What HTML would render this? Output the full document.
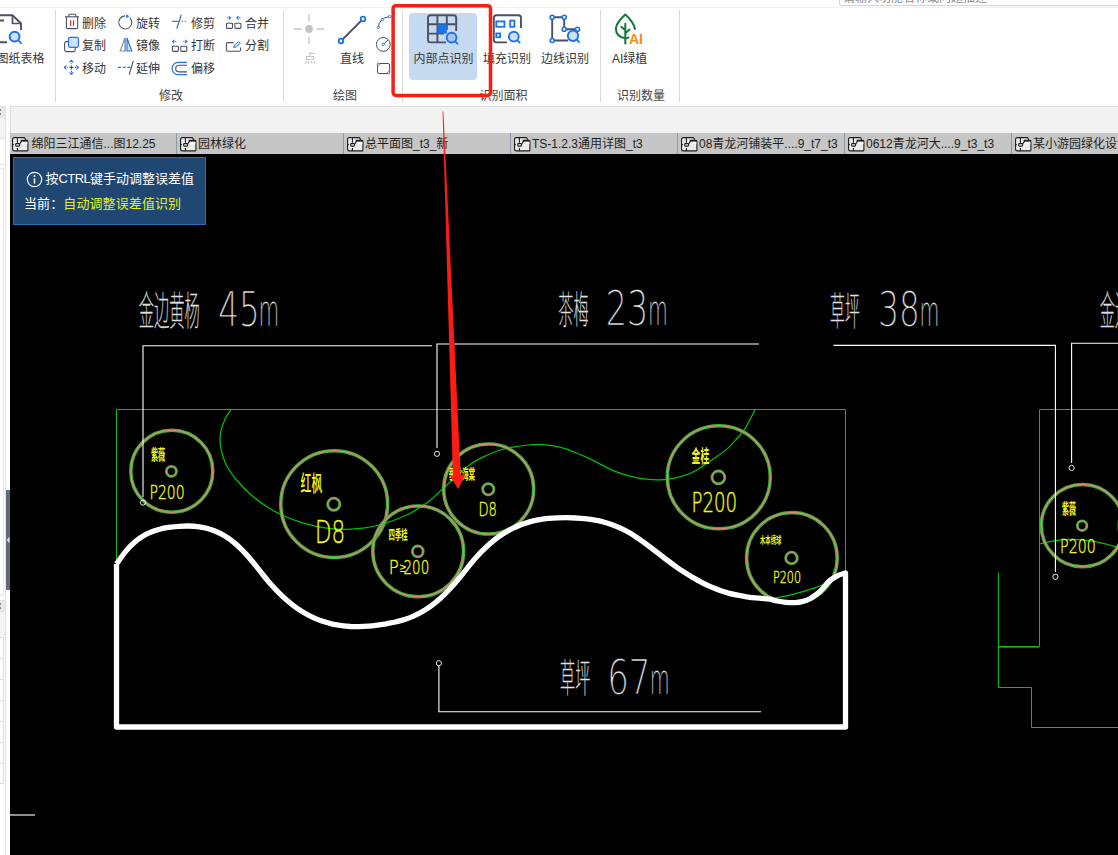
<!DOCTYPE html>
<html lang="zh-CN">
<head>
<meta charset="utf-8">
<title>CAD</title>
<style>
html,body{margin:0;padding:0;}
body{width:1118px;height:855px;overflow:hidden;position:relative;background:#fff;
 font-family:"Liberation Sans","Noto Sans CJK SC",sans-serif;font-size:12px;color:#333;}
.abs{position:absolute;}
#ribbon{position:absolute;left:0;top:0;width:1118px;height:106px;background:#fff;}
#ribbon .topline{position:absolute;left:0;top:7px;width:1118px;height:1px;background:#f0f0f0;}
#ribbon .sep{position:absolute;top:10px;width:1px;height:92px;background:#d9d9d9;}
#ribbon .t{position:absolute;white-space:nowrap;line-height:16px;height:16px;font-size:12px;color:#363636;}
#ribbon .g{position:absolute;white-space:nowrap;line-height:16px;height:16px;font-size:12px;color:#444;top:88px;}
#ribbon svg{position:absolute;overflow:visible;}
#band{position:absolute;left:10px;top:106px;width:1108px;height:27px;background:#f2f2f2;border-top:1px solid #dcdcdc;border-left:1px solid #e0e0e0;box-sizing:border-box;}
#tabs{position:absolute;left:10px;top:133px;width:1108px;height:21px;background:#c6c6c6;}
#tabs .tab{position:absolute;top:0;height:21px;width:167px;box-sizing:border-box;border-left:1px solid #8e98a6;white-space:nowrap;overflow:hidden;font-size:12px;line-height:21px;color:#1e1e1e;}
#tabs .tab span{position:absolute;left:21px;top:0.5px;}
#tabs .tab:first-child span{left:21.5px;}
#tabs .tab:first-child svg{left:2px;}
#tabs .tab svg{position:absolute;left:2.5px;top:3.5px;}
#cad{position:absolute;left:10px;top:154px;width:1108px;height:701px;background:#000;}
#info{position:absolute;left:13px;top:157px;width:193px;height:68px;box-sizing:border-box;background:#1f4772;border:1px solid #2e6db3;color:#fff;font-size:13px;}
#info .l1{position:absolute;left:31.5px;top:12px;line-height:18px;white-space:nowrap;}
#info .l2{position:absolute;left:10px;top:37px;line-height:18px;white-space:nowrap;font-size:13px;letter-spacing:0.1px;}
#info .l2 b{font-weight:normal;color:#e4f21c;}
#left{position:absolute;left:0;top:106px;width:10px;height:749px;background:#fff;}
</style>
</head>
<body>
<div id="ribbon">
 <div class="topline"></div>
 <!-- search box (cropped at top) -->
 <div class="abs" style="left:839px;top:-18px;width:300px;height:22px;border:1px solid #d4d4d4;border-radius:2px;background:#fff;"></div>
 <div class="abs" style="left:843px;top:-10px;font-size:12px;line-height:16px;color:#8a8a8a;white-space:nowrap;">请输入功能名称或问题描述</div>

 <!-- 图纸表格 big button -->
 <svg style="left:-10px;top:10px" width="40" height="40" viewBox="-10 10 40 40" fill="none">
  <path d="M-6 15.2H12.5L21 23.5V30" stroke="#4a5162" stroke-width="1.9"/>
  <path d="M12.5 15.2V23.5H21" stroke="#4a5162" stroke-width="1.7"/>
  <path d="M-6 20.5H4M-6 42.3H7" stroke="#4a5162" stroke-width="1.9"/>
  <circle cx="14.6" cy="36.6" r="4.9" fill="#cfe0f8" stroke="#1b73e8" stroke-width="2"/>
  <path d="M18.3 40.4L21.6 43.6" stroke="#1b73e8" stroke-width="1.8"/>
 </svg>
 <div class="t" style="left:-3.5px;top:51px;">图纸表格</div>

 <div class="sep" style="left:55px"></div>

 <!-- col 1 icons -->
 <svg style="left:60px;top:10px" width="24" height="70" viewBox="60 10 24 70" fill="none">
  <!-- trash -->
  <path d="M65 16.8H79" stroke="#4a5162" stroke-width="1.1"/>
  <path d="M68.8 16.8V15.3Q68.8 14.3 69.8 14.3H74.8Q75.8 14.3 75.8 15.3V16.8" stroke="#4a5162" stroke-width="1.1"/>
  <path d="M66.4 16.8V27.2Q66.4 28.6 67.8 28.6H76.3Q77.7 28.6 77.7 27.2V16.8" stroke="#4a5162" stroke-width="1.1"/>
  <path d="M70.6 20.2V25.8M73.6 20.2V25.8" stroke="#e02020" stroke-width="1.1"/>
  <!-- copy -->
  <rect x="64.6" y="41.6" width="10.6" height="10" rx="1.8" stroke="#4a5162" stroke-width="1.1"/>
  <rect x="68.5" y="37.4" width="10" height="10" rx="1.8" fill="#cfe0f8" stroke="#1b73e8" stroke-width="1.2"/>
  <!-- move -->
  <g stroke="#1b73e8" stroke-width="1.1">
   <path d="M71.4 60.5V64M71.4 70.8V74.3M64.5 67.4H68M74.8 67.4H78.3" stroke-dasharray="1.6 1.2"/>
   <path d="M69.5 62.4L71.4 60.4L73.3 62.4M69.5 72.4L71.4 74.4L73.3 72.4M66.4 65.5L64.4 67.4L66.4 69.3M76.4 65.5L78.4 67.4L76.4 69.3"/>
  </g>
  <path d="M69.4 67.4H73.4M71.4 65.4V69.4" stroke="#4a5162" stroke-width="1.1"/>
 </svg>
 <div class="t" style="left:82px;top:16px;">删除</div>
 <div class="t" style="left:82px;top:38px;">复制</div>
 <div class="t" style="left:82px;top:61px;">移动</div>

 <!-- col 2 icons -->
 <svg style="left:114px;top:10px" width="24" height="70" viewBox="114 10 24 70" fill="none">
  <!-- rotate -->
  <path d="M127.8 16.4A6.5 6.5 0 1 1 122.8 16.4" stroke="#4a5162" stroke-width="1.1" transform="rotate(20 125.3 22.4)"/>
  <path d="M126.2 14.3L129.3 16.3L126.2 18.2Z" fill="#1b73e8"/>
  <!-- mirror -->
  <path d="M124.9 38L120.2 51H124.9Z" stroke="#8a8f9a" stroke-width="1.1"/>
  <path d="M125.5 37.5V51.5" stroke="#9aa0ab" stroke-width="1.1"/>
  <path d="M127 38L131.8 51H127Z" fill="#cfe0f8" stroke="#1b73e8" stroke-width="1.1"/>
  <!-- extend -->
  <path d="M118 67.4H130.5" stroke="#1b73e8" stroke-width="1.1" stroke-dasharray="3 1.7"/>
  <path d="M133.2 61L129.2 74.6" stroke="#4a5162" stroke-width="1.1"/>
 </svg>
 <div class="t" style="left:136px;top:16px;">旋转</div>
 <div class="t" style="left:136px;top:38px;">镜像</div>
 <div class="t" style="left:136px;top:61px;">延伸</div>

 <!-- col 3 icons -->
 <svg style="left:168px;top:10px" width="24" height="70" viewBox="168 10 24 70" fill="none">
  <!-- trim -->
  <path d="M172 21.3H178.6" stroke="#1b73e8" stroke-width="1.1"/>
  <path d="M181.5 21.3H187" stroke="#1b73e8" stroke-width="1.1" stroke-dasharray="1.5 1.6"/>
  <path d="M181.2 14.9L176.8 28.7" stroke="#4a5162" stroke-width="1.1"/>
  <!-- break -->
  <rect x="172.4" y="46.2" width="6" height="5.2" rx="0.8" stroke="#4a5162" stroke-width="1.1"/>
  <rect x="180.8" y="46.2" width="6" height="5.2" rx="0.8" stroke="#4a5162" stroke-width="1.1"/>
  <g stroke="#1b73e8" stroke-width="1.1">
   <path d="M173 41.5H176.3M183.3 41.5H186.6" stroke-dasharray="1.3 0.8"/>
   <path d="M174.3 39.8L172.6 41.5L174.3 43.2M185.3 39.8L187 41.5L185.3 43.2"/>
  </g>
  <!-- offset -->
  <path d="M187 62.4H178.2A6.1 6.1 0 0 0 178.2 74.6H187" stroke="#1b73e8" stroke-width="1.2"/>
  <path d="M187 65.3H179A3.3 3.3 0 0 0 179 71.9H187" stroke="#4a5162" stroke-width="1.1"/>
 </svg>
 <div class="t" style="left:191px;top:16px;">修剪</div>
 <div class="t" style="left:191px;top:38px;">打断</div>
 <div class="t" style="left:191px;top:61px;">偏移</div>

 <!-- col 4 icons -->
 <svg style="left:222px;top:10px" width="24" height="50" viewBox="222 10 24 50" fill="none">
  <!-- merge -->
  <rect x="226.5" y="23.2" width="6" height="5.2" rx="0.8" stroke="#4a5162" stroke-width="1.1"/>
  <rect x="234.9" y="23.2" width="6" height="5.2" rx="0.8" stroke="#4a5162" stroke-width="1.1"/>
  <g stroke="#1b73e8" stroke-width="1.1">
   <path d="M227 17.8H230.3M237 17.8H240.4" stroke-dasharray="1.3 0.8"/>
   <path d="M228.8 16.1L230.5 17.8L228.8 19.5M238.6 16.1L236.9 17.8L238.6 19.5"/>
  </g>
  <!-- split -->
  <path d="M233.5 42.6H227.8Q226.4 42.6 226.4 44V49.8Q226.4 51.2 227.8 51.2H239.2Q240.6 51.2 240.6 49.8V47.5" stroke="#4a5162" stroke-width="1.1"/>
  <path d="M233.6 47.6L234.4 45.2L238.6 41.6L240.4 43.2L236.2 47Z" fill="#cfe0f8" stroke="#1b73e8" stroke-width="0.9"/>
 </svg>
 <div class="t" style="left:245px;top:16px;">合并</div>
 <div class="t" style="left:245px;top:38px;">分割</div>
 <div class="g" style="left:159px;">修改</div>

 <div class="sep" style="left:283px"></div>

 <!-- 绘图 group -->
 <svg style="left:290px;top:10px" width="104" height="70" viewBox="290 10 104 70" fill="none">
  <!-- point (disabled) -->
  <path d="M294 29H301.5M316.5 29H324M309 14V21.5M309 36.5V44" stroke="#c4c4c4" stroke-width="1.3"/>
  <circle cx="309" cy="29" r="3.9" fill="#c4c4c4"/>
  <!-- line -->
  <path d="M341 41L363 19" stroke="#4a5162" stroke-width="1.8"/>
  <circle cx="341" cy="41" r="2.3" fill="#fff" stroke="#1b73e8" stroke-width="1.8"/>
  <circle cx="363" cy="19" r="2.3" fill="#fff" stroke="#1b73e8" stroke-width="1.8"/>
  <!-- arc -->
  <path d="M378.4 27.4Q379 18 389.5 16.6" stroke="#4a5162" stroke-width="1"/>
  <circle cx="378.4" cy="27.4" r="1.2" fill="#fff" stroke="#1b73e8" stroke-width="0.9"/>
  <circle cx="382.3" cy="19.6" r="1.2" fill="#fff" stroke="#1b73e8" stroke-width="0.9"/>
  <circle cx="389.5" cy="16.6" r="1.2" fill="#fff" stroke="#1b73e8" stroke-width="0.9"/>
  <!-- circle -->
  <circle cx="383.3" cy="44.4" r="6.9" stroke="#4a5162" stroke-width="1"/>
  <path d="M383.3 44.4L388 40" stroke="#4a5162" stroke-width="1"/>
  <circle cx="383.3" cy="44.4" r="1.2" fill="#fff" stroke="#1b73e8" stroke-width="0.9"/>
  <!-- rect -->
  <rect x="377.6" y="63.5" width="12" height="10" rx="1.5" stroke="#4a5162" stroke-width="1"/>
  <circle cx="378.3" cy="64.2" r="1.2" fill="#fff" stroke="#1b73e8" stroke-width="0.9"/>
  <circle cx="388.6" cy="72.8" r="1.2" fill="#fff" stroke="#1b73e8" stroke-width="0.9"/>
 </svg>
 <div class="t" style="left:304px;top:51px;color:#bbb;">点</div>
 <div class="t" style="left:340px;top:51px;">直线</div>
 <div class="g" style="left:333px;">绘图</div>

 <div class="sep" style="left:402px"></div>

 <!-- 识别面积 group -->
 <div class="abs" style="left:409px;top:13px;width:68px;height:67px;background:#c5d9f1;border-radius:4px;"></div>
 <svg style="left:420px;top:10px" width="170" height="40" viewBox="420 10 170 40" fill="none">
  <!-- 内部点识别 icon -->
  <path d="M446 42.4H430.6Q428 42.4 428 39.8V17.8Q428 15.2 430.6 15.2H453.6Q456.2 15.2 456.2 17.8V31" stroke="#4a5162" stroke-width="1.9"/>
  <path d="M437.4 15.2V42.4M446.8 15.2V30M428 24.3H456.2M428 33.6H444" stroke="#4a5162" stroke-width="1.9"/>
  <rect x="437.4" y="24.3" width="9.4" height="9.3" fill="#1b73e8"/>
  <circle cx="451.6" cy="37.6" r="4.9" fill="#a6c5f0" stroke="#1b73e8" stroke-width="1.9"/>
  <path d="M455.2 41.3L458 44.2" stroke="#1b73e8" stroke-width="1.8"/>
  <!-- 填充识别 icon -->
  <path d="M507 42.4H496.4Q493.8 42.4 493.8 39.8V17.8Q493.8 15.2 496.4 15.2H518.4Q521 15.2 521 17.8V28" stroke="#4a5162" stroke-width="1.9"/>
  <rect x="496.3" y="21.4" width="8.2" height="5.4" stroke="#1b73e8" stroke-width="1.8"/>
  <rect x="510.2" y="20.6" width="4.2" height="6.2" stroke="#1b73e8" stroke-width="1.8"/>
  <rect x="496.3" y="33.4" width="3.8" height="3.8" stroke="#1b73e8" stroke-width="1.8"/>
  <circle cx="513.8" cy="36.6" r="4.9" fill="#cfe0f8" stroke="#1b73e8" stroke-width="1.9"/>
  <path d="M517.4 40.3L520.2 43.2" stroke="#1b73e8" stroke-width="1.8"/>
  <!-- 边线识别 icon -->
  <path d="M552.2 17.2V40.5H568M552.2 17.2H564.2V29.2H577.6" stroke="#4a5162" stroke-width="1.9"/>
  <circle cx="573" cy="35.8" r="5.2" fill="#cfe0f8" stroke="#1b73e8" stroke-width="1.9"/>
  <path d="M576.8 39.6L579.6 42.6" stroke="#1b73e8" stroke-width="1.8"/>
  <g fill="#fff" stroke="#1b73e8" stroke-width="1.6">
   <circle cx="552.2" cy="17.2" r="2"/><circle cx="564.2" cy="17.2" r="2"/>
   <circle cx="564.2" cy="29.2" r="2"/><circle cx="577.6" cy="29.2" r="2"/>
   <circle cx="552.2" cy="40.5" r="2"/>
  </g>
 </svg>
 <div class="t" style="left:413.5px;top:51px;">内部点识别</div>
 <div class="t" style="left:483px;top:51px;">填充识别</div>
 <div class="t" style="left:541px;top:51px;">边线识别</div>
 <div class="g" style="left:479.5px;">识别面积</div>

 <div class="sep" style="left:600px"></div>

 <!-- AI绿植 -->
 <svg style="left:610px;top:10px" width="40" height="40" viewBox="610 10 40 40" fill="none">
  <path d="M628.4 37.6Q627 38.3 625.3 38.3Q615.9 36.6 615.9 28.4Q616.4 22.6 625.3 14.5Q633.6 22 635 29" stroke="#14773a" stroke-width="2" stroke-linecap="round" stroke-linejoin="round"/>
  <path d="M625.3 23.8V43.4M621.3 26.8L625.3 30.2M629.5 29.6L625.3 33.2" stroke="#14773a" stroke-width="2" stroke-linecap="round"/>
  <text x="629" y="43.9" font-family="'Liberation Sans',sans-serif" font-weight="bold" font-size="13.8" fill="#f28a1e" textLength="14" lengthAdjust="spacingAndGlyphs">AI</text>
 </svg>
 <div class="t" style="left:612px;top:51px;">AI绿植</div>
 <div class="g" style="left:617px;">识别数量</div>

 <div class="sep" style="left:679px"></div>
</div>
<div id="left">
 <div class="abs" style="left:0;top:0;width:6px;height:749px;box-sizing:border-box;border-right:1px solid #e2e2e2;background:#fff;"></div>
 <div class="abs" style="left:0;top:0;width:5px;height:12px;background:#e8e8e8;border-top:1px solid #dcdcdc;box-sizing:border-box;"></div>
 <div class="abs" style="left:0;top:3px;width:1px;height:2px;background:#888;"></div>
 <div class="abs" style="left:0;top:7px;width:1px;height:2px;background:#888;"></div>
 <div class="abs" style="left:0;top:12px;width:5px;height:21px;background:#f4f4f4;border-bottom:1px solid #e2e2e2;box-sizing:border-box;"></div>
 <div class="abs" style="left:0;top:58px;width:5px;height:1px;background:#e6e6e6;"></div>
 <div class="abs" style="left:0;top:62px;width:4px;height:428px;box-sizing:border-box;border:1px solid #e4e4e4;border-left:none;"></div>
 <div class="abs" style="left:6px;top:384px;width:4px;height:100px;background:#5f6b7c;"></div>
 <svg class="abs" style="left:6px;top:430px" width="4" height="8" viewBox="0 0 4 8"><path d="M3.6 0.8L0.6 4L3.6 7.2Z" fill="#dfe3e8"/></svg>
 <div class="abs" style="left:0;top:494px;width:5px;height:13px;background:#e8e8e8;border-top:1px solid #dcdcdc;box-sizing:border-box;"></div>
 <div class="abs" style="left:0;top:497px;width:1px;height:2px;background:#888;"></div>
 <div class="abs" style="left:0;top:501px;width:1px;height:2px;background:#888;"></div>
 <div class="abs" style="left:0;top:507px;width:5px;height:24px;background:#f4f4f4;"></div>
 <div class="abs" style="left:0;top:531px;width:4px;height:147px;box-sizing:border-box;border:1px solid #dcdcdc;border-left:none;background:repeating-linear-gradient(to bottom,#fff 0,#fff 20px,#e0e0e0 20px,#e0e0e0 21px);"></div>
</div>
<div id="band"></div>
<div id="tabs">
 <div class="tab" style="left:0px;border-left:none;"><svg width="17" height="15" viewBox="0 0 17 15" fill="none"><path d="M2.3 0.6H11.8Q12.8 0.6 13.1 1.6L13.6 3.4H14.9Q15.9 3.4 15.9 4.4V12.9Q15.9 13.9 14.9 13.9H2.3Q0.6 13.9 0.6 12.2V2.3Q0.6 0.6 2.3 0.6Z" fill="#ebebeb" stroke="#1c1c1c" stroke-width="1.1"/><path d="M5.4 0.6V5.8M5.4 11V13.9M0.6 7.6H1.8M7.5 7.6L9.2 4.6H15.9M9.2 4.6V3.4H13.6" stroke="#1c1c1c" stroke-width="1.1"/><rect x="9.8" y="4.6" width="5.6" height="2.6" fill="#fafafa"/><rect x="3.7" y="6.6" width="3.8" height="2.5" rx="0.6" fill="#fafafa" stroke="#1c1c1c" stroke-width="1.1"/></svg><span>绵阳三江通信...图12.25</span></div>
 <div class="tab" style="left:166px;"><svg width="17" height="15" viewBox="0 0 17 15" fill="none"><path d="M2.3 0.6H11.8Q12.8 0.6 13.1 1.6L13.6 3.4H14.9Q15.9 3.4 15.9 4.4V12.9Q15.9 13.9 14.9 13.9H2.3Q0.6 13.9 0.6 12.2V2.3Q0.6 0.6 2.3 0.6Z" fill="#ebebeb" stroke="#1c1c1c" stroke-width="1.1"/><path d="M5.4 0.6V5.8M5.4 11V13.9M0.6 7.6H1.8M7.5 7.6L9.2 4.6H15.9M9.2 4.6V3.4H13.6" stroke="#1c1c1c" stroke-width="1.1"/><rect x="9.8" y="4.6" width="5.6" height="2.6" fill="#fafafa"/><rect x="3.7" y="6.6" width="3.8" height="2.5" rx="0.6" fill="#fafafa" stroke="#1c1c1c" stroke-width="1.1"/></svg><span>园林绿化</span></div>
 <div class="tab" style="left:333px;"><svg width="17" height="15" viewBox="0 0 17 15" fill="none"><path d="M2.3 0.6H11.8Q12.8 0.6 13.1 1.6L13.6 3.4H14.9Q15.9 3.4 15.9 4.4V12.9Q15.9 13.9 14.9 13.9H2.3Q0.6 13.9 0.6 12.2V2.3Q0.6 0.6 2.3 0.6Z" fill="#ebebeb" stroke="#1c1c1c" stroke-width="1.1"/><path d="M5.4 0.6V5.8M5.4 11V13.9M0.6 7.6H1.8M7.5 7.6L9.2 4.6H15.9M9.2 4.6V3.4H13.6" stroke="#1c1c1c" stroke-width="1.1"/><rect x="9.8" y="4.6" width="5.6" height="2.6" fill="#fafafa"/><rect x="3.7" y="6.6" width="3.8" height="2.5" rx="0.6" fill="#fafafa" stroke="#1c1c1c" stroke-width="1.1"/></svg><span>总平面图_t3_新</span></div>
 <div class="tab" style="left:500px;"><svg width="17" height="15" viewBox="0 0 17 15" fill="none"><path d="M2.3 0.6H11.8Q12.8 0.6 13.1 1.6L13.6 3.4H14.9Q15.9 3.4 15.9 4.4V12.9Q15.9 13.9 14.9 13.9H2.3Q0.6 13.9 0.6 12.2V2.3Q0.6 0.6 2.3 0.6Z" fill="#ebebeb" stroke="#1c1c1c" stroke-width="1.1"/><path d="M5.4 0.6V5.8M5.4 11V13.9M0.6 7.6H1.8M7.5 7.6L9.2 4.6H15.9M9.2 4.6V3.4H13.6" stroke="#1c1c1c" stroke-width="1.1"/><rect x="9.8" y="4.6" width="5.6" height="2.6" fill="#fafafa"/><rect x="3.7" y="6.6" width="3.8" height="2.5" rx="0.6" fill="#fafafa" stroke="#1c1c1c" stroke-width="1.1"/></svg><span>TS-1.2.3通用详图_t3</span></div>
 <div class="tab" style="left:667px;"><svg width="17" height="15" viewBox="0 0 17 15" fill="none"><path d="M2.3 0.6H11.8Q12.8 0.6 13.1 1.6L13.6 3.4H14.9Q15.9 3.4 15.9 4.4V12.9Q15.9 13.9 14.9 13.9H2.3Q0.6 13.9 0.6 12.2V2.3Q0.6 0.6 2.3 0.6Z" fill="#ebebeb" stroke="#1c1c1c" stroke-width="1.1"/><path d="M5.4 0.6V5.8M5.4 11V13.9M0.6 7.6H1.8M7.5 7.6L9.2 4.6H15.9M9.2 4.6V3.4H13.6" stroke="#1c1c1c" stroke-width="1.1"/><rect x="9.8" y="4.6" width="5.6" height="2.6" fill="#fafafa"/><rect x="3.7" y="6.6" width="3.8" height="2.5" rx="0.6" fill="#fafafa" stroke="#1c1c1c" stroke-width="1.1"/></svg><span>08青龙河铺装平....9_t7_t3</span></div>
 <div class="tab" style="left:834px;"><svg width="17" height="15" viewBox="0 0 17 15" fill="none"><path d="M2.3 0.6H11.8Q12.8 0.6 13.1 1.6L13.6 3.4H14.9Q15.9 3.4 15.9 4.4V12.9Q15.9 13.9 14.9 13.9H2.3Q0.6 13.9 0.6 12.2V2.3Q0.6 0.6 2.3 0.6Z" fill="#ebebeb" stroke="#1c1c1c" stroke-width="1.1"/><path d="M5.4 0.6V5.8M5.4 11V13.9M0.6 7.6H1.8M7.5 7.6L9.2 4.6H15.9M9.2 4.6V3.4H13.6" stroke="#1c1c1c" stroke-width="1.1"/><rect x="9.8" y="4.6" width="5.6" height="2.6" fill="#fafafa"/><rect x="3.7" y="6.6" width="3.8" height="2.5" rx="0.6" fill="#fafafa" stroke="#1c1c1c" stroke-width="1.1"/></svg><span>0612青龙河大....9_t3_t3</span></div>
 <div class="tab" style="left:1001px;"><svg width="17" height="15" viewBox="0 0 17 15" fill="none"><path d="M2.3 0.6H11.8Q12.8 0.6 13.1 1.6L13.6 3.4H14.9Q15.9 3.4 15.9 4.4V12.9Q15.9 13.9 14.9 13.9H2.3Q0.6 13.9 0.6 12.2V2.3Q0.6 0.6 2.3 0.6Z" fill="#ebebeb" stroke="#1c1c1c" stroke-width="1.1"/><path d="M5.4 0.6V5.8M5.4 11V13.9M0.6 7.6H1.8M7.5 7.6L9.2 4.6H15.9M9.2 4.6V3.4H13.6" stroke="#1c1c1c" stroke-width="1.1"/><rect x="9.8" y="4.6" width="5.6" height="2.6" fill="#fafafa"/><rect x="3.7" y="6.6" width="3.8" height="2.5" rx="0.6" fill="#fafafa" stroke="#1c1c1c" stroke-width="1.1"/></svg><span>某小游园绿化设计</span></div>
</div>
<div id="cad"></div>
<!--CAD-->
<svg id="cadsvg" class="abs" style="left:0;top:0" width="1118" height="855" viewBox="0 0 1118 855" fill="none">
<defs><clipPath id="cv"><rect x="10" y="154" width="1108" height="701"/></clipPath></defs>
<g clip-path="url(#cv)">
<path d="M10 815H35" stroke="#8e8e8e" stroke-width="2"/>
<path d="M116.5 564V409.5H845.5V572" stroke="#00c400" stroke-width="1"/>
<path d="M231.0 409.6C230.0 411.1 226.9 415.2 225.2 418.7C223.5 422.2 221.9 427.2 221.0 430.8C220.1 434.4 219.9 436.7 220.0 440.0C220.1 443.3 220.3 446.3 221.4 450.6C222.5 454.9 224.0 460.7 226.7 465.8C229.4 470.9 233.1 475.9 237.4 481.0C241.7 486.1 247.0 491.5 252.6 496.2C258.2 500.9 265.2 505.8 270.8 509.2C276.4 512.6 280.9 514.6 286.0 516.8C291.1 519.0 296.1 520.8 301.2 522.4C306.3 524.0 311.3 525.2 316.4 526.3C321.5 527.3 326.3 528.2 331.6 528.7C336.9 529.2 342.9 529.5 348.0 529.4C353.1 529.3 357.5 528.8 362.0 528.2C366.5 527.6 370.0 527.2 375.0 526.0C380.0 524.8 386.3 523.0 392.0 521.0C397.7 519.0 405.3 515.7 409.0 514.0C412.7 512.3 411.0 512.9 414.3 510.8C417.6 508.7 423.8 505.2 428.6 501.5C433.4 497.8 438.1 493.0 442.9 488.7C447.7 484.4 452.4 480.0 457.2 475.8C462.0 471.6 466.7 466.9 471.5 463.6C476.3 460.3 481.0 458.1 485.8 455.8C490.6 453.5 495.3 451.5 500.1 450.0C504.9 448.5 509.6 447.7 514.4 446.9C519.2 446.1 523.9 445.4 528.7 445.0C533.5 444.6 537.8 444.2 543.0 444.6C548.2 445.0 554.7 445.9 560.0 447.2C565.3 448.5 570.0 450.6 575.0 452.5C580.0 454.4 583.3 455.8 590.0 458.9C596.7 462.0 606.7 468.1 615.0 471.4C623.3 474.6 632.5 477.0 640.0 478.4C647.5 479.8 654.0 479.9 660.0 479.8C666.0 479.7 670.7 478.9 675.7 477.8C680.7 476.8 685.7 475.3 690.0 473.5C694.3 471.7 697.5 469.4 701.5 466.9C705.5 464.4 709.7 461.5 714.0 458.5C718.3 455.5 723.4 452.2 727.2 448.9C731.0 445.6 734.0 441.9 737.0 438.5C740.0 435.1 742.2 433.1 745.2 428.3C748.2 423.5 753.4 412.9 755.0 409.8" stroke="#00c400" stroke-width="1.25"/>
<path d="M770.0 598.8C771.0 598.6 772.1 598.7 776.3 597.9C780.5 597.1 788.7 595.4 795.0 593.8C801.3 592.2 809.0 589.9 814.0 588.2C819.0 586.5 821.7 585.5 825.0 583.8C828.3 582.1 832.5 579.0 834.0 578.0" stroke="#00c400" stroke-width="1.25"/>
<path d="M1118 409.5H1039.5V646.5" stroke="#00c400" stroke-width="1"/>
<path d="M998.5 572.5V687.5H1031.5V727.5H1118" stroke="#00c400" stroke-width="1"/>
<path d="M998.5 646.7H1039.5" stroke="#00c400" stroke-width="1.6"/>
<path d="M1039.5 544Q1075 533 1118 547.5" stroke="#00c400" stroke-width="1.25"/>
<circle cx="171.8" cy="471.2" r="41.0" stroke="#40b03c" stroke-width="3.5"/>
<circle cx="171.8" cy="471.2" r="41.0" stroke="#ee8478" stroke-width="1.1"/>
<circle cx="334.2" cy="504.1" r="53.4" stroke="#40b03c" stroke-width="3.5"/>
<circle cx="334.2" cy="504.1" r="53.4" stroke="#ee8478" stroke-width="1.1"/>
<circle cx="488.7" cy="489.1" r="45.0" stroke="#40b03c" stroke-width="3.5"/>
<circle cx="488.7" cy="489.1" r="45.0" stroke="#ee8478" stroke-width="1.1"/>
<circle cx="418.2" cy="551.3" r="45.4" stroke="#40b03c" stroke-width="3.5"/>
<circle cx="418.2" cy="551.3" r="45.4" stroke="#ee8478" stroke-width="1.1"/>
<circle cx="718.8" cy="477.3" r="51.5" stroke="#40b03c" stroke-width="3.5"/>
<circle cx="718.8" cy="477.3" r="51.5" stroke="#ee8478" stroke-width="1.1"/>
<circle cx="791.9" cy="557.9" r="45.3" stroke="#40b03c" stroke-width="3.5"/>
<circle cx="791.9" cy="557.9" r="45.3" stroke="#ee8478" stroke-width="1.1"/>
<circle cx="1082.5" cy="525.6" r="41.2" stroke="#40b03c" stroke-width="3.5"/>
<circle cx="1082.5" cy="525.6" r="41.2" stroke="#ee8478" stroke-width="1.1"/>
<circle cx="1160.5" cy="525.6" r="41.2" stroke="#40b03c" stroke-width="3.5"/>
<circle cx="1160.5" cy="525.6" r="41.2" stroke="#ee8478" stroke-width="1.1"/>
<circle cx="171.4" cy="471.3" r="5.0" stroke="#48b042" stroke-width="2.8"/>
<circle cx="171.4" cy="471.3" r="5.0" stroke="#dc8674" stroke-width="1.0"/>
<circle cx="333.8" cy="504.2" r="6.1" stroke="#48b042" stroke-width="2.8"/>
<circle cx="333.8" cy="504.2" r="6.1" stroke="#dc8674" stroke-width="1.0"/>
<circle cx="488.3" cy="489.2" r="5.6" stroke="#48b042" stroke-width="2.8"/>
<circle cx="488.3" cy="489.2" r="5.6" stroke="#dc8674" stroke-width="1.0"/>
<circle cx="417.8" cy="551.4" r="5.4" stroke="#48b042" stroke-width="2.8"/>
<circle cx="417.8" cy="551.4" r="5.4" stroke="#dc8674" stroke-width="1.0"/>
<circle cx="718.4" cy="477.4" r="6.4" stroke="#48b042" stroke-width="2.8"/>
<circle cx="718.4" cy="477.4" r="6.4" stroke="#dc8674" stroke-width="1.0"/>
<circle cx="791.5" cy="558.0" r="5.8" stroke="#48b042" stroke-width="2.8"/>
<circle cx="791.5" cy="558.0" r="5.8" stroke="#dc8674" stroke-width="1.0"/>
<circle cx="1082.1" cy="525.7" r="4.8" stroke="#48b042" stroke-width="2.8"/>
<circle cx="1082.1" cy="525.7" r="4.8" stroke="#dc8674" stroke-width="1.0"/>
<path d="M432 345.7H143V497" stroke="#fff" stroke-width="1.1"/>
<circle cx="143" cy="502.6" r="2.6" stroke="#fff" stroke-width="0.9"/>
<path d="M759 344H437V448" stroke="#fff" stroke-width="1.1"/>
<circle cx="437" cy="453.8" r="2.6" stroke="#fff" stroke-width="0.9"/>
<path d="M833.5 345.4H1055.4V572" stroke="#fff" stroke-width="1.1"/>
<circle cx="1055.4" cy="576.8" r="2.6" stroke="#fff" stroke-width="0.9"/>
<path d="M1118 343.2H1071.6V463" stroke="#fff" stroke-width="1.1"/>
<circle cx="1071.6" cy="467.9" r="2.6" stroke="#fff" stroke-width="0.9"/>
<path d="M761 711.8H438.9V666" stroke="#fff" stroke-width="1.1"/>
<circle cx="438.9" cy="663.2" r="2.6" stroke="#fff" stroke-width="0.9"/>
<path d="M116.5 564.0C118.0 561.9 122.5 555.2 125.5 551.6C128.5 548.0 131.5 545.0 134.5 542.3C137.5 539.7 140.5 537.6 143.5 535.8C146.5 534.0 149.5 532.6 152.5 531.5C155.5 530.3 158.5 529.5 161.5 528.7C164.5 528.0 167.5 527.6 170.5 527.2C173.5 526.8 176.5 526.5 179.5 526.3C182.5 526.1 185.5 525.9 188.5 526.0C191.5 526.1 194.5 526.2 197.5 526.6C200.5 527.0 203.5 527.5 206.5 528.3C209.5 529.1 212.5 530.0 215.5 531.3C218.5 532.5 221.5 534.0 224.5 535.8C227.5 537.6 230.5 539.7 233.5 542.1C236.5 544.5 239.5 547.3 242.5 550.4C245.5 553.4 248.5 556.9 251.5 560.5C254.5 564.0 257.5 568.0 260.5 571.7C263.5 575.4 266.5 579.2 269.5 582.7C272.5 586.1 275.5 589.3 278.5 592.3C281.5 595.4 284.5 598.2 287.5 600.7C290.5 603.3 293.5 605.7 296.5 607.8C299.5 609.9 302.5 611.8 305.5 613.5C308.5 615.3 311.5 616.8 314.5 618.1C317.5 619.4 320.5 620.6 323.5 621.6C326.5 622.6 329.5 623.4 332.5 624.1C335.5 624.7 338.5 625.2 341.5 625.6C344.5 626.0 347.5 626.3 350.5 626.5C353.5 626.6 356.5 626.6 359.5 626.6C362.5 626.5 365.5 626.3 368.5 626.1C371.5 625.9 374.5 625.5 377.5 625.1C380.5 624.7 383.5 624.3 386.5 623.8C389.5 623.2 392.5 622.7 395.5 622.0C398.5 621.2 401.5 620.5 404.5 619.5C407.5 618.5 410.5 617.4 413.5 616.1C416.5 614.7 419.5 613.3 422.5 611.5C425.5 609.8 428.5 607.8 431.5 605.6C434.5 603.4 437.5 600.9 440.5 598.2C443.5 595.4 446.5 592.4 449.5 589.2C452.5 586.0 455.5 582.6 458.5 579.0C461.5 575.4 464.5 571.5 467.5 567.8C470.5 564.1 473.5 560.3 476.5 557.0C479.5 553.6 482.5 550.5 485.5 547.7C488.5 544.8 491.5 542.3 494.5 539.9C497.5 537.6 500.5 535.5 503.5 533.6C506.5 531.7 509.5 530.0 512.5 528.5C515.5 527.0 518.5 525.7 521.5 524.5C524.5 523.4 527.5 522.5 530.5 521.6C533.5 520.8 536.5 520.2 539.5 519.6C542.5 519.1 545.5 518.7 548.5 518.4C551.5 518.1 554.5 517.9 557.5 517.8C560.5 517.7 563.5 517.7 566.5 517.7C569.5 517.7 572.5 517.8 575.5 518.0C578.5 518.2 581.5 518.4 584.5 518.7C587.5 519.0 590.5 519.4 593.5 519.9C596.5 520.4 599.5 521.0 602.5 521.7C605.5 522.5 608.5 523.4 611.5 524.4C614.5 525.5 617.5 526.7 620.5 528.1C623.5 529.5 626.5 531.1 629.5 532.8C632.5 534.6 635.5 536.6 638.5 538.6C641.5 540.6 644.5 542.9 647.5 545.1C650.5 547.3 653.5 549.6 656.5 551.9C659.5 554.2 662.5 556.6 665.5 558.9C668.5 561.1 671.5 563.4 674.5 565.6C677.5 567.7 680.5 569.8 683.5 571.8C686.5 573.7 689.5 575.6 692.5 577.4C695.5 579.1 698.5 580.8 701.5 582.3C704.5 583.9 707.5 585.3 710.5 586.6C713.5 587.9 716.5 589.1 719.5 590.2C722.5 591.3 725.5 592.2 728.5 593.1C731.5 593.9 734.5 594.6 737.5 595.2C740.5 595.9 743.5 596.3 746.5 596.8C749.5 597.2 752.5 597.6 755.5 597.9C758.5 598.2 762.1 598.5 764.5 598.7C766.9 598.9 767.9 598.7 770.0 599.1C772.1 599.5 774.3 600.5 777.0 601.0C779.7 601.5 783.0 602.0 786.0 602.3C789.0 602.6 792.2 602.8 795.0 602.6C797.8 602.5 800.5 602.0 803.0 601.4C805.5 600.8 807.2 600.4 810.0 598.8C812.8 597.1 816.8 594.4 820.0 591.5C823.2 588.6 826.2 583.8 829.0 581.3C831.8 578.8 833.8 577.7 836.5 576.3C839.2 574.9 844.0 573.5 845.5 573.0V727H116.5V564" stroke="#fff" stroke-width="5.3" stroke-linejoin="round"/>
</g>
</svg>
<svg id="cadtext" class="abs" style="left:0;top:0" width="1118" height="855" viewBox="0 0 1118 855">
<text transform="matrix(0.1527 0 0 0.3935 138.69 325.25)" font-family="'Noto Sans CJK SC',sans-serif" font-weight="100" font-size="100" fill="#fff" stroke="#fff" stroke-width="0.3" vector-effect="non-scaling-stroke" opacity="0.88">金边黄杨</text>
<text transform="matrix(0.3243 0 0 0.4865 218.28 325.51)" font-family="'DejaVu Sans',sans-serif" font-weight="200" font-size="100" fill="#fff" stroke="#000" stroke-width="0.45" vector-effect="non-scaling-stroke" opacity="0.92">45</text>
<text transform="matrix(0.2132 0 0 0.4375 258.56 326.00)" font-family="'DejaVu Sans',sans-serif" font-weight="200" font-size="100" fill="#fff" stroke="#000" stroke-width="0.45" vector-effect="non-scaling-stroke" opacity="0.92">m</text>
<text transform="matrix(0.1511 0 0 0.3793 558.34 323.47)" font-family="'Noto Sans CJK SC',sans-serif" font-weight="100" font-size="100" fill="#fff" stroke="#fff" stroke-width="0.3" vector-effect="non-scaling-stroke" opacity="0.88">茶梅</text>
<text transform="matrix(0.3336 0 0 0.4711 605.76 324.83)" font-family="'DejaVu Sans',sans-serif" font-weight="200" font-size="100" fill="#fff" stroke="#000" stroke-width="0.45" vector-effect="non-scaling-stroke" opacity="0.92">23</text>
<text transform="matrix(0.2039 0 0 0.4250 647.96 325.30)" font-family="'DejaVu Sans',sans-serif" font-weight="200" font-size="100" fill="#fff" stroke="#000" stroke-width="0.45" vector-effect="non-scaling-stroke" opacity="0.92">m</text>
<text transform="matrix(0.1481 0 0 0.3815 830.11 324.85)" font-family="'Noto Sans CJK SC',sans-serif" font-weight="100" font-size="100" fill="#fff" stroke="#fff" stroke-width="0.3" vector-effect="non-scaling-stroke" opacity="0.88">草坪</text>
<text transform="matrix(0.3261 0 0 0.4750 878.22 326.42)" font-family="'DejaVu Sans',sans-serif" font-weight="200" font-size="100" fill="#fff" stroke="#000" stroke-width="0.45" vector-effect="non-scaling-stroke" opacity="0.92">38</text>
<text transform="matrix(0.2039 0 0 0.4214 919.46 326.30)" font-family="'DejaVu Sans',sans-serif" font-weight="200" font-size="100" fill="#fff" stroke="#000" stroke-width="0.45" vector-effect="non-scaling-stroke" opacity="0.92">m</text>
<text transform="matrix(0.1527 0 0 0.3935 1099.69 325.25)" font-family="'Noto Sans CJK SC',sans-serif" font-weight="100" font-size="100" fill="#fff" stroke="#fff" stroke-width="0.3" vector-effect="non-scaling-stroke" opacity="0.88">金边黄杨</text>
<text transform="matrix(0.1508 0 0 0.3815 560.10 692.25)" font-family="'Noto Sans CJK SC',sans-serif" font-weight="100" font-size="100" fill="#fff" stroke="#fff" stroke-width="0.3" vector-effect="non-scaling-stroke" opacity="0.88">草坪</text>
<text transform="matrix(0.3411 0 0 0.4724 607.13 693.53)" font-family="'DejaVu Sans',sans-serif" font-weight="200" font-size="100" fill="#fff" stroke="#000" stroke-width="0.45" vector-effect="non-scaling-stroke" opacity="0.92">67</text>
<text transform="matrix(0.2053 0 0 0.4214 649.84 693.60)" font-family="'DejaVu Sans',sans-serif" font-weight="200" font-size="100" fill="#fff" stroke="#000" stroke-width="0.45" vector-effect="non-scaling-stroke" opacity="0.92">m</text>
<text transform="matrix(0.0713 0 0 0.1490 150.99 460.01)" font-family="'Noto Sans CJK SC',sans-serif" font-weight="700" font-size="100" fill="#f0f818">紫薇</text>
<text transform="matrix(0.1400 0 0 0.1947 149.52 498.61)" font-family="'DejaVu Sans',sans-serif" font-weight="200" font-size="100" fill="#f0f818" stroke="#f0f818" stroke-width="0.35" vector-effect="non-scaling-stroke">P200</text>
<text transform="matrix(0.1088 0 0 0.2202 300.57 490.72)" font-family="'Noto Sans CJK SC',sans-serif" font-weight="500" font-size="100" fill="#f0f818">红枫</text>
<text transform="matrix(0.2143 0 0 0.3263 314.93 543.17)" font-family="'DejaVu Sans',sans-serif" font-weight="200" font-size="100" fill="#f0f818" stroke="#f0f818" stroke-width="0.35" vector-effect="non-scaling-stroke">D8</text>
<text transform="matrix(0.0662 0 0 0.1354 448.74 479.25)" font-family="'Noto Sans CJK SC',sans-serif" font-weight="700" font-size="100" fill="#f0f818">垂丝海棠</text>
<text transform="matrix(0.1311 0 0 0.1987 478.43 516.30)" font-family="'DejaVu Sans',sans-serif" font-weight="200" font-size="100" fill="#f0f818" stroke="#f0f818" stroke-width="0.35" vector-effect="non-scaling-stroke">D8</text>
<text transform="matrix(0.0641 0 0 0.1260 388.55 538.74)" font-family="'Noto Sans CJK SC',sans-serif" font-weight="700" font-size="100" fill="#f0f818">四季桂</text>
<text transform="matrix(0.1643 0 0 0.1959 388.63 573.80)" font-family="'DejaVu Sans',sans-serif" font-weight="200" font-size="100" fill="#f0f818" stroke="#f0f818" stroke-width="0.35" vector-effect="non-scaling-stroke">P</text>
<text transform="matrix(0.0952 0 0 0.1345 398.85 572.30)" font-family="'DejaVu Sans',sans-serif" font-weight="400" font-size="100" fill="#f0f818">≥</text>
<text transform="matrix(0.1343 0 0 0.1908 403.56 573.81)" font-family="'DejaVu Sans',sans-serif" font-weight="200" font-size="100" fill="#f0f818" stroke="#f0f818" stroke-width="0.35" vector-effect="non-scaling-stroke">200</text>
<text transform="matrix(0.0877 0 0 0.1804 691.62 463.20)" font-family="'Noto Sans CJK SC',sans-serif" font-weight="700" font-size="100" fill="#f0f818">金桂</text>
<text transform="matrix(0.1813 0 0 0.2658 691.52 512.33)" font-family="'DejaVu Sans',sans-serif" font-weight="200" font-size="100" fill="#f0f818" stroke="#f0f818" stroke-width="0.35" vector-effect="non-scaling-stroke">P200</text>
<text transform="matrix(0.0531 0 0 0.1073 760.05 544.33)" font-family="'Noto Sans CJK SC',sans-serif" font-weight="700" font-size="100" fill="#f0f818">木本绣球</text>
<text transform="matrix(0.1117 0 0 0.1526 772.96 582.55)" font-family="'DejaVu Sans',sans-serif" font-weight="200" font-size="100" fill="#f0f818" stroke="#f0f818" stroke-width="0.35" vector-effect="non-scaling-stroke">P200</text>
<text transform="matrix(0.0697 0 0 0.1458 1062.09 513.54)" font-family="'Noto Sans CJK SC',sans-serif" font-weight="700" font-size="100" fill="#f0f818">紫薇</text>
<text transform="matrix(0.1417 0 0 0.2026 1060.10 553.20)" font-family="'DejaVu Sans',sans-serif" font-weight="200" font-size="100" fill="#f0f818" stroke="#f0f818" stroke-width="0.35" vector-effect="non-scaling-stroke">P200</text>
</svg>
<!--/CAD-->
<div id="info">
 <svg class="abs" style="left:12.2px;top:12.6px" width="17" height="17" viewBox="0 0 17 17" fill="none"><circle cx="8.5" cy="8.5" r="7.2" stroke="#fff" stroke-width="1.2"/><path d="M8.5 7.3V12.6" stroke="#fff" stroke-width="1.5"/><circle cx="8.5" cy="4.9" r="1" fill="#fff"/></svg>
 <div class="l1">按<span style="letter-spacing:-0.6px">CTRL</span>键手动调整误差值</div>
 <div class="l2">当前：<b>自动调整误差值识别</b></div>
</div>
<!--RED-->
<svg id="anno" class="abs" style="left:0;top:0" width="1118" height="855" viewBox="0 0 1118 855" fill="none">
<rect x="393.1" y="5.7" width="97.4" height="89.7" rx="2.8" stroke="#fb1d13" stroke-width="3.5"/>
<path d="M442.6 111.5L443.4 111.5L460.7 475.6L465.8 473L458.3 489.3L449.2 474.8L452.9 476.2Z" fill="#fb1d13"/>
</svg>
<!--/RED-->
</body>
</html>
